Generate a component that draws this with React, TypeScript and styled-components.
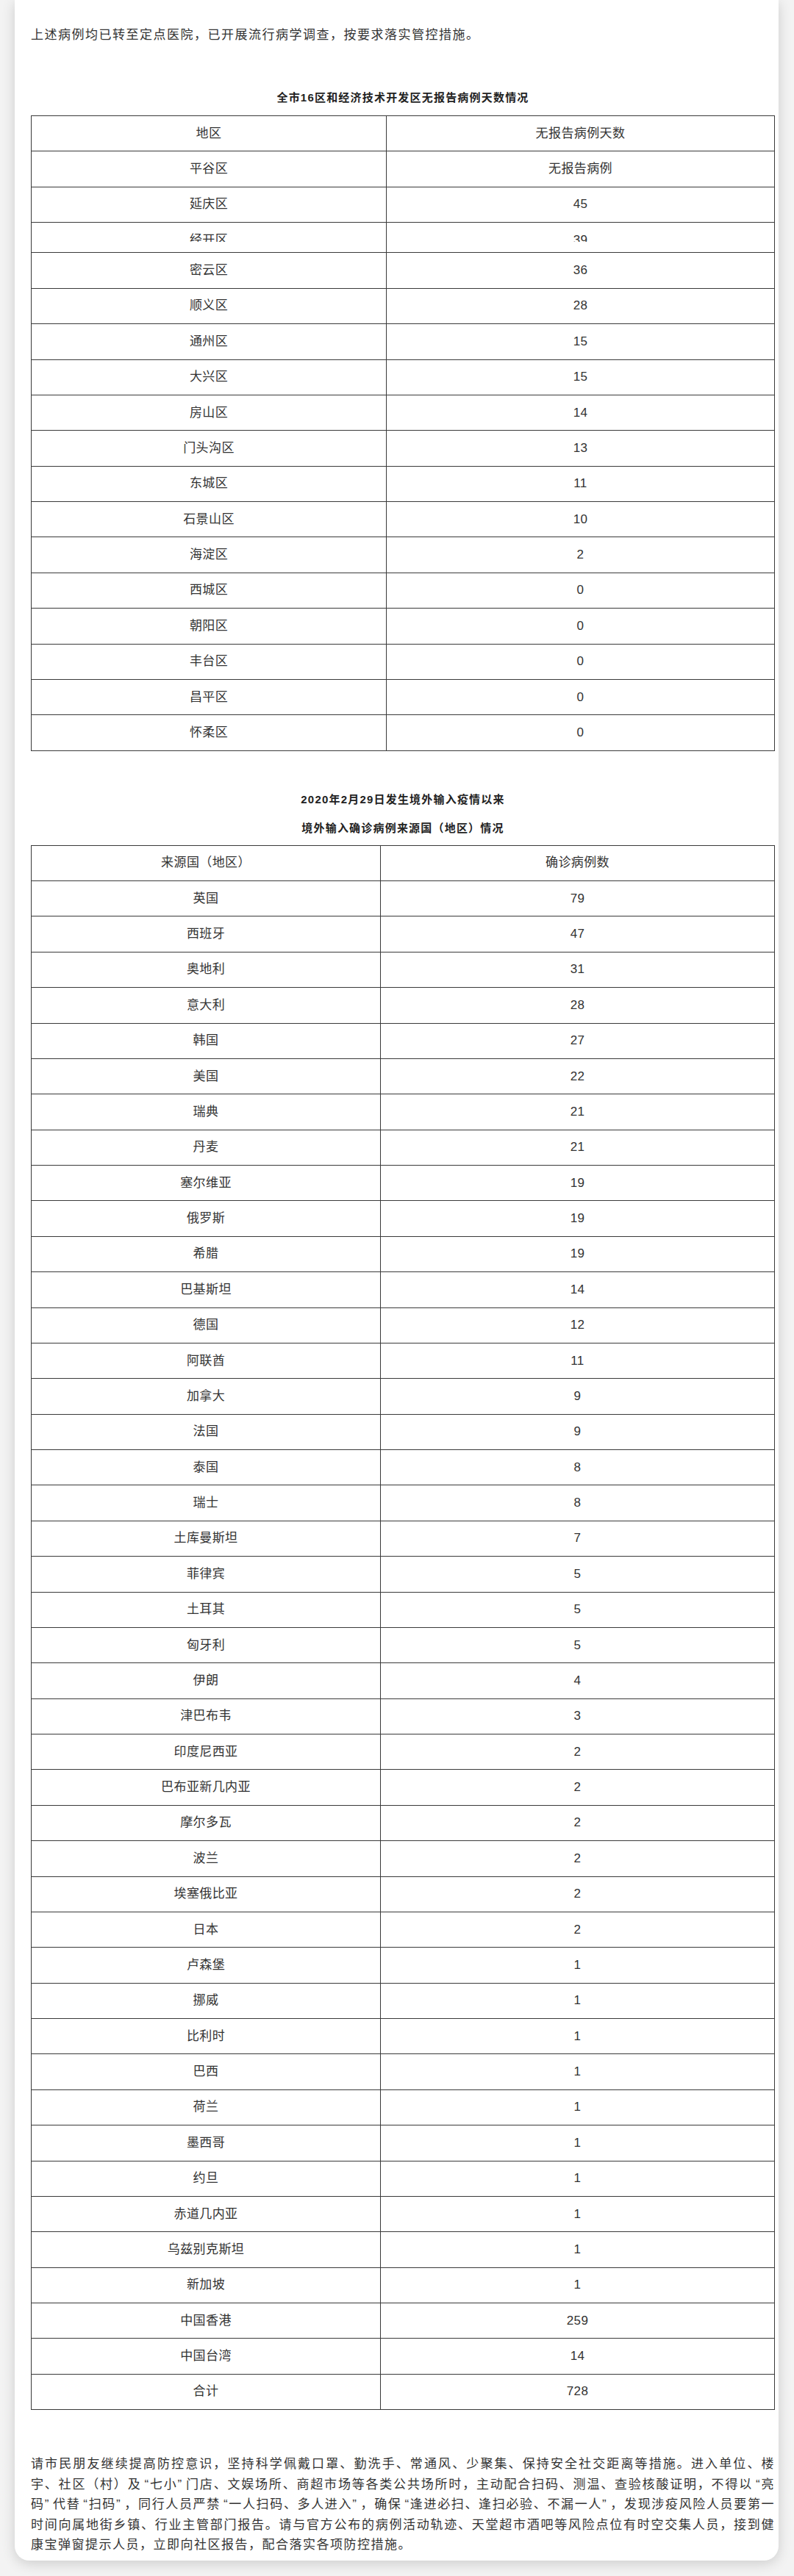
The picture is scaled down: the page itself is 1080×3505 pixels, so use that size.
import React from 'react';
import styled, { createGlobalStyle } from 'styled-components';

const GlobalStyle = createGlobalStyle`
  body {
    margin: 0;
    background: #f3f3f3;
    font-family: "Liberation Sans", "Noto Sans CJK SC", sans-serif;
    color: #333;
  }
`;

const Page = styled.div`
  padding: 0 21px 21px 20px;
`;

const Card = styled.article`
  background: #fff;
  border-radius: 0 0 20px 20px;
  box-shadow: 0 4px 18px rgba(0, 0, 0, 0.16);
  padding: 34px 5px 7.5px 22px;
`;

const Paragraph = styled.p<{ $gap?: number }>`
  margin: ${props => props.$gap || 0}px 0 0;
  font-size: 17px;
  line-height: 27.5px;
  letter-spacing: 1.5px;
  text-align: justify;
`;

const Quote = styled.span<{ $open?: boolean }>`
  font-family: "Liberation Sans", sans-serif;
  padding-left: ${props => props.$open ? '4px' : '0'};
  padding-right: ${props => props.$open ? '0' : '4px'};
`;

const TableTitle = styled.h3<{ $gap: number }>`
  margin: ${props => props.$gap}px 0 0;
  font-size: 15px;
  line-height: 24px;
  font-weight: 700;
  letter-spacing: 1.2px;
  text-align: center;
  color: #222;
`;

const Table = styled.table<{ $gap: number }>`
  width: 100%;
  margin-top: ${props => props.$gap}px;
  border-collapse: collapse;
  table-layout: fixed;
`;

const Col = styled.col<{ $w: number }>`
  width: ${props => props.$w}px;
`;

const Cell = styled.td<{ $clipped?: boolean }>`
  border: 1px solid #3a3a3a;
  padding: ${props => props.$clipped ? '11.7px 8px 14px' : '11.7px 8px'};
  font-size: 17px;
  line-height: 24px;
  letter-spacing: 0.4px;
  text-align: center;
  vertical-align: top;
  color: #333;
`;

const Clip = styled.div`
  height: 14.6px;
  overflow: hidden;
`;

type Row = [string, string, boolean?];

const districts: Row[] = [
  ['地区', '无报告病例天数'],
  ['平谷区', '无报告病例'],
  ['延庆区', '45'],
  ['经开区', '39', true],
  ['密云区', '36'],
  ['顺义区', '28'],
  ['通州区', '15'],
  ['大兴区', '15'],
  ['房山区', '14'],
  ['门头沟区', '13'],
  ['东城区', '11'],
  ['石景山区', '10'],
  ['海淀区', '2'],
  ['西城区', '0'],
  ['朝阳区', '0'],
  ['丰台区', '0'],
  ['昌平区', '0'],
  ['怀柔区', '0'],
];

const sources: Row[] = [
  ['来源国（地区）', '确诊病例数'],
  ['英国', '79'],
  ['西班牙', '47'],
  ['奥地利', '31'],
  ['意大利', '28'],
  ['韩国', '27'],
  ['美国', '22'],
  ['瑞典', '21'],
  ['丹麦', '21'],
  ['塞尔维亚', '19'],
  ['俄罗斯', '19'],
  ['希腊', '19'],
  ['巴基斯坦', '14'],
  ['德国', '12'],
  ['阿联酋', '11'],
  ['加拿大', '9'],
  ['法国', '9'],
  ['泰国', '8'],
  ['瑞士', '8'],
  ['土库曼斯坦', '7'],
  ['菲律宾', '5'],
  ['土耳其', '5'],
  ['匈牙利', '5'],
  ['伊朗', '4'],
  ['津巴布韦', '3'],
  ['印度尼西亚', '2'],
  ['巴布亚新几内亚', '2'],
  ['摩尔多瓦', '2'],
  ['波兰', '2'],
  ['埃塞俄比亚', '2'],
  ['日本', '2'],
  ['卢森堡', '1'],
  ['挪威', '1'],
  ['比利时', '1'],
  ['巴西', '1'],
  ['荷兰', '1'],
  ['墨西哥', '1'],
  ['约旦', '1'],
  ['赤道几内亚', '1'],
  ['乌兹别克斯坦', '1'],
  ['新加坡', '1'],
  ['中国香港', '259'],
  ['中国台湾', '14'],
  ['合计', '728'],
];

const DataTable: React.FC<{ rows: Row[]; firstCol: number; gap: number }> = ({ rows, firstCol, gap }) => (
  <Table $gap={gap}>
    <colgroup>
      <Col $w={firstCol} />
      <col />
    </colgroup>
    <tbody>
      {rows.map(([name, value, clipped]) => (
        <tr key={name}>
          <Cell $clipped={clipped}>{clipped ? <Clip>{name}</Clip> : name}</Cell>
          <Cell $clipped={clipped}>{clipped ? <Clip>{value}</Clip> : value}</Cell>
        </tr>
      ))}
    </tbody>
  </Table>
);

const App: React.FC = () => (
  <Page>
    <GlobalStyle />
    <Card>
      <Paragraph>上述病例均已转至定点医院，已开展流行病学调查，按要求落实管控措施。</Paragraph>

      <TableTitle $gap={59.5}>全市16区和经济技术开发区无报告病例天数情况</TableTitle>
      <DataTable rows={districts} firstCol={483} gap={12} />

      <TableTitle $gap={54}>2020年2月29日发生境外输入疫情以来</TableTitle>
      <TableTitle $gap={15}>境外输入确诊病例来源国（地区）情况</TableTitle>
      <DataTable rows={sources} firstCol={475} gap={11} />

      <Paragraph $gap={60}>
        请市民朋友继续提高防控意识，坚持科学佩戴口罩、勤洗手、常通风、少聚集、保持安全社交距离等措施。进入单位、楼宇、社区（村）及
        <Quote $open>“</Quote>七小<Quote>”</Quote>门店、文娱场所、商超市场等各类公共场所时，主动配合扫码、测温、查验核酸证明，不得以
        <Quote $open>“</Quote>亮码<Quote>”</Quote>代替<Quote $open>“</Quote>扫码<Quote>”</Quote>，同行人员严禁
        <Quote $open>“</Quote>一人扫码、多人进入<Quote>”</Quote>，确保<Quote $open>“</Quote>逢进必扫、逢扫必验、不漏一人
        <Quote>”</Quote>，发现涉疫风险人员要第一时间向属地街乡镇、行业主管部门报告。请与官方公布的病例活动轨迹、天堂超市酒吧等风险点位有时空交集人员，接到健康宝弹窗提示人员，立即向社区报告，配合落实各项防控措施。
      </Paragraph>
    </Card>
  </Page>
);

export default App;
